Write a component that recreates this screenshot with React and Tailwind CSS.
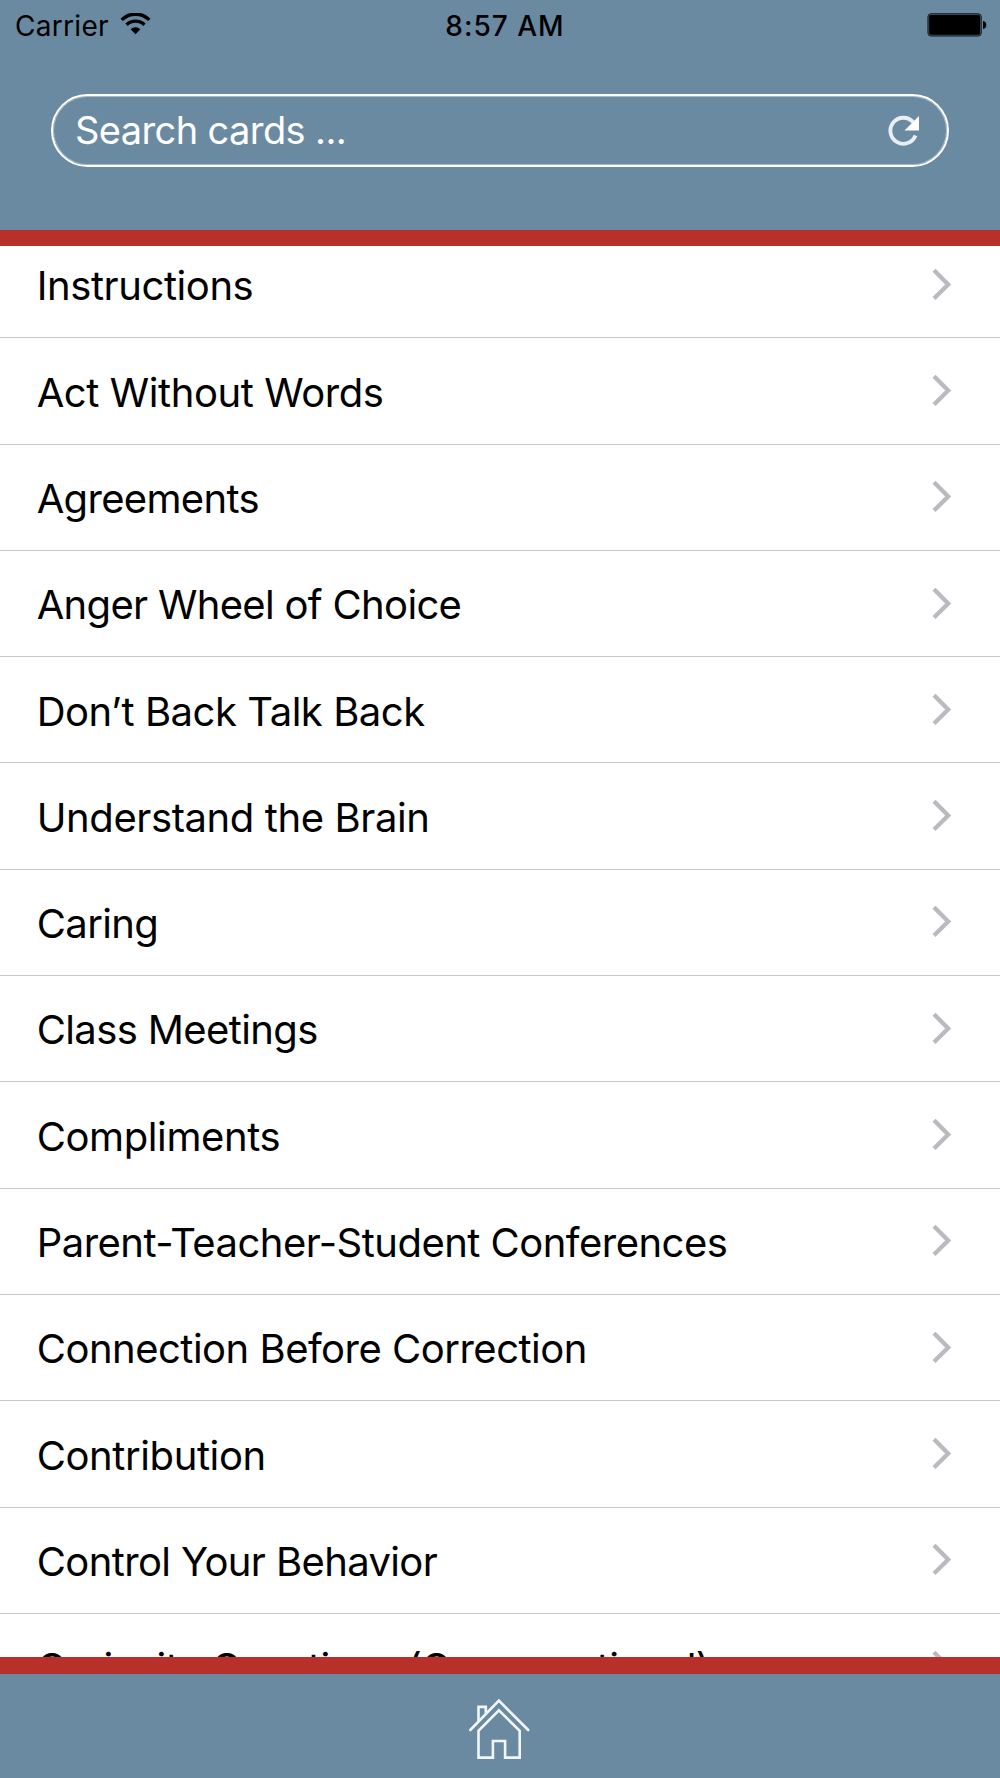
import React from 'react';

const cards = [
  { title: 'Instructions', tracking: 'tracking-[-0.42px]' },
  { title: 'Act Without Words', tracking: 'tracking-[-0.42px]' },
  { title: 'Agreements', tracking: 'tracking-[-0.68px]' },
  { title: 'Anger Wheel of Choice', tracking: 'tracking-[-0.68px]' },
  { title: 'Don’t Back Talk Back', tracking: 'tracking-[-0.47px]' },
  { title: 'Understand the Brain', tracking: 'tracking-[-0.4px]' },
  { title: 'Caring', tracking: 'tracking-[-0.6px]' },
  { title: 'Class Meetings', tracking: 'tracking-[-0.62px]' },
  { title: 'Compliments', tracking: 'tracking-[-0.4px]' },
  { title: 'Parent-Teacher-Student Conferences', tracking: 'tracking-[-0.52px]' },
  { title: 'Connection Before Correction', tracking: 'tracking-[-0.5px]' },
  { title: 'Contribution', tracking: 'tracking-[-0.4px]' },
  { title: 'Control Your Behavior', tracking: 'tracking-[-0.62px]' },
  { title: 'Curiosity Questions (Conversational)', tracking: 'tracking-[-0.57px]' },
];

function WifiIcon() {
  return (
    <svg className="ml-[11px] h-[22px] w-[31px]" viewBox="0 0 31 22" fill="none" stroke="#000" strokeWidth="3.4">
      <path d="M1.7 6.9A19.5 19.5 0 0 1 29.3 6.9" />
      <path d="M6.5 11.8A12.8 12.8 0 0 1 24.5 11.8" />
      <path d="M10.6 16.2A7 7 0 0 1 20.4 16.2L15.5 21.3Z" fill="#000" stroke="none" />
    </svg>
  );
}

function BatteryIcon() {
  return (
    <svg className="h-6 w-[60px]" viewBox="0 0 60 24">
      <rect x="0.9" y="0.7" width="53.4" height="22.4" rx="3.2" fill="#3d4f5c" stroke="#1b252c" strokeWidth="1" />
      <rect x="2.2" y="2" width="50.8" height="19.8" rx="1.8" fill="#000" />
      <path d="M56 8c2.2.3 3.3 1.8 3.3 4s-1.1 3.7-3.3 4z" fill="#000" />
    </svg>
  );
}

function ReloadIcon() {
  return (
    <svg className="h-8 w-8" viewBox="0 0 32 32" fill="none">
      <path d="M27.5 20.5A13 13 0 1 1 25.3 7.3" stroke="#e9eef1" strokeWidth="3.8" />
      <path d="M31 1V15.6H16.5L22 10Z" fill="#fff" />
    </svg>
  );
}

function Chevron() {
  return (
    <svg className="h-8 w-5" viewBox="0 0 20 32" fill="none" stroke="#bbbac1" strokeWidth="4.3">
      <path d="M2 1.2L16.2 15.4L2 29.6" />
    </svg>
  );
}

function HomeIcon() {
  return (
    <svg className="h-[62px] w-[62px]" viewBox="0 0 62 62" fill="none" stroke="#f3f6f8" strokeWidth="2.6">
      <path d="M2.3 33L30.9 3.7L60.2 33" strokeLinecap="round" />
      <path d="M10.5 24V9.9H17.8V16.5" />
      <path d="M10.5 60.6V33.8L30.9 13.4L51.7 33.8V60.6H37.1V44H24.9V60.6Z" />
    </svg>
  );
}

export default function App() {
  return (
    <div className="flex h-[1778px] w-[1000px] flex-col overflow-hidden bg-[#6a8aa1] font-['Inter',sans-serif] text-black">
      <header className="flex h-[246px] shrink-0 flex-col border-b-[16px] border-[#b8302b]">
        <div className="grid h-[50px] grid-cols-3 items-center pl-[15px] pr-[13px]">
          <div className="flex items-center pt-px">
            <span className="text-[28px] leading-none tracking-[0.3px]">Carrier</span>
            <span className="-mt-1"><WifiIcon /></span>
          </div>
          <div className="pt-0.5 pl-2 text-center text-[28px] leading-none font-medium tracking-[1px]">8:57 AM</div>
          <div className="flex justify-end"><BatteryIcon /></div>
        </div>
        <div className="mx-[51px] mt-11 flex h-[73px] items-center justify-between rounded-full border-2 border-white pl-[22px] pr-[27px] shadow-[inset_0_0_0_1px_rgba(255,255,255,0.4)]">
          <span className="pb-[2px] text-[38px] leading-none tracking-[-0.6px] text-white">Search cards ...</span>
          <ReloadIcon />
        </div>
      </header>
      <main className="min-h-0 flex-1 overflow-hidden bg-white">
        <ul className="-mt-[14px]">
          {cards.map(({ title, tracking }) => (
            <li key={title} className="flex h-[106.3px] items-center justify-between border-b border-[#c8c7cc] pl-[36.7px] pr-[48px]">
              <span className={`pt-[3.4px] text-[40px] leading-none whitespace-nowrap ${tracking}`}>{title}</span>
              <Chevron />
            </li>
          ))}
        </ul>
      </main>
      <footer className="flex h-[121px] shrink-0 justify-center border-t-[17px] border-[#b8302b] pt-[22.5px] pr-[3px]">
        <HomeIcon />
      </footer>
    </div>
  );
}
